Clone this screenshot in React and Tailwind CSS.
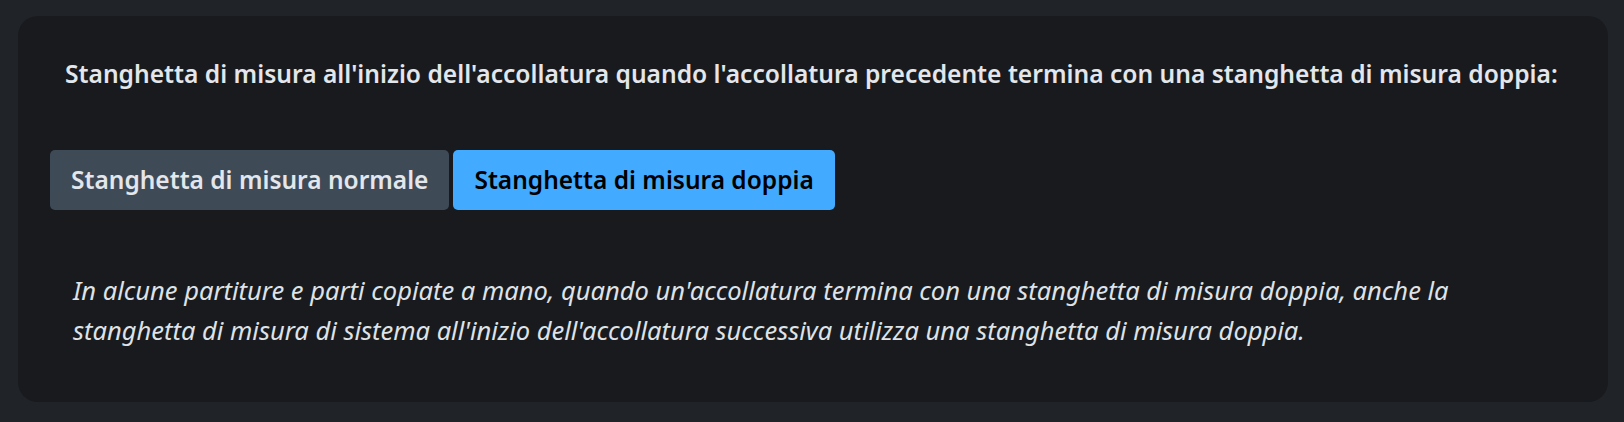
export default function App() {
  return (
    <div className="w-[1624px] h-[422px] bg-[#202327] pt-4 pl-[18px]" style={{ fontFamily: "'Noto Sans', sans-serif" }}>
      <div className="w-[1590px] h-[386px] bg-[#181a1e] rounded-[20px] flex flex-col">
        <div className="pl-[47px] pt-[42px] text-[24.6px] leading-[32px] font-semibold text-[#e3e6ea] whitespace-nowrap">
          Stanghetta di misura all'inizio dell'accollatura quando l'accollatura precedente termina con una stanghetta di misura doppia:
        </div>
        <div className="pl-[32px] mt-[60px] flex gap-1">
          <button className="h-[60px] px-[21px] rounded-[5px] bg-[#3f4a57] text-[#e3e6ea] text-[24.5px] font-semibold">Stanghetta di misura normale</button>
          <button className="h-[60px] px-[21px] rounded-[5px] bg-[#42aaff] text-black text-[24.5px] font-semibold">Stanghetta di misura doppia</button>
        </div>
        <div className="pl-[55px] mt-[60px] w-[1560px] text-[25.5px] leading-[40px] italic text-[#dfe2e6] whitespace-nowrap">
          In alcune partiture e parti copiate a mano, quando un'accollatura termina con una stanghetta di misura doppia, anche la<br />
          stanghetta di misura di sistema all'inizio dell'accollatura successiva utilizza una stanghetta di misura doppia.
        </div>
      </div>
    </div>
  );
}
